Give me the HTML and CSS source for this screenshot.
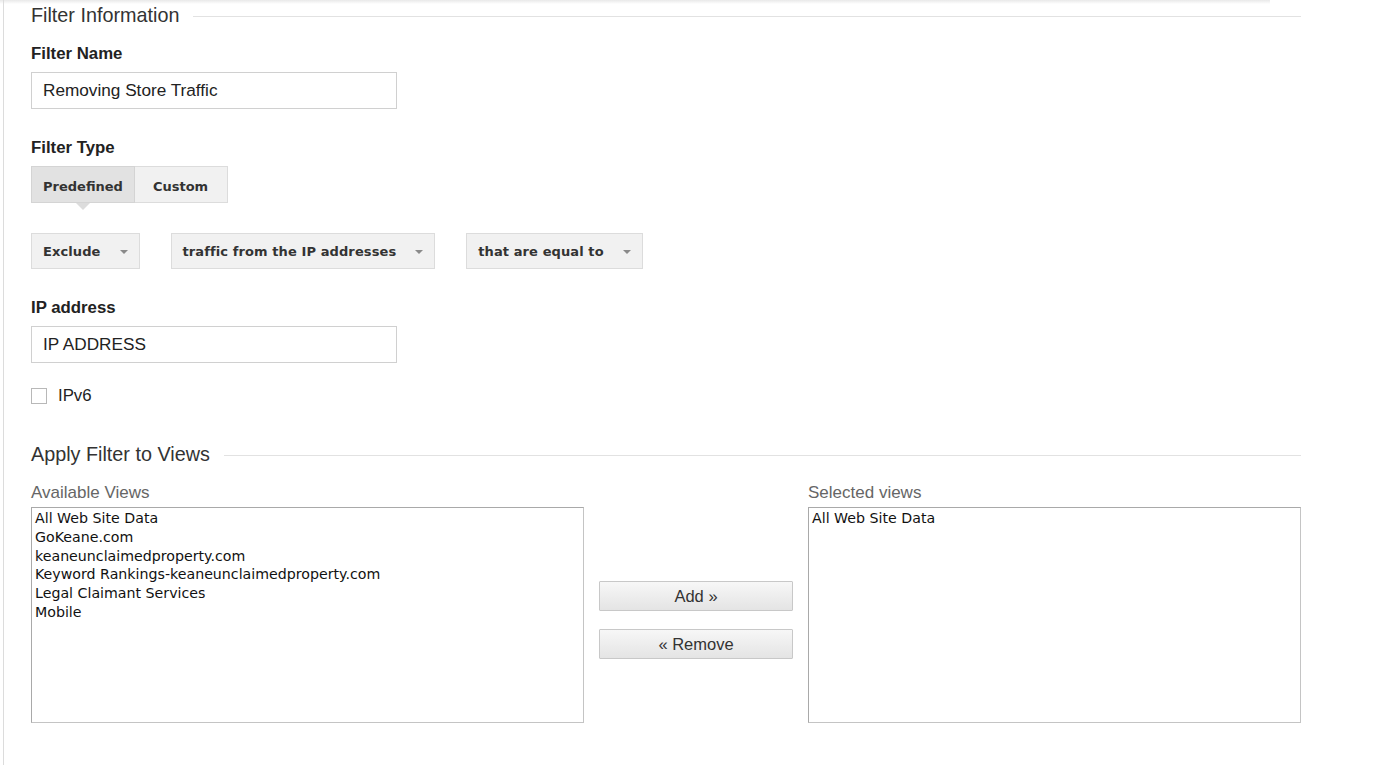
FILE: index.html
```html
<!DOCTYPE html>
<html lang="en">
<head>
<meta charset="utf-8">
<title>Filter Information</title>
<link rel="stylesheet" href="styles.css">
</head>
<body>
<div class="page">
  <div class="section-head">
    <h2 class="section-title">Filter Information</h2>
    <div class="rule"></div>
  </div>

  <label class="field-label first">Filter Name</label>
  <div class="text-input">Removing Store Traffic</div>

  <label class="field-label">Filter Type</label>
  <div class="tabs">
    <div class="tab active">Predefined</div>
    <div class="tab">Custom</div>
  </div>

  <div class="dropdowns">
    <div class="dropdown">Exclude<span class="caret"></span></div>
    <div class="dropdown">traffic from the IP addresses<span class="caret"></span></div>
    <div class="dropdown">that are equal to<span class="caret"></span></div>
  </div>

  <label class="field-label">IP address</label>
  <div class="text-input">IP ADDRESS</div>

  <div class="check-row">
    <span class="checkbox"></span>
    <span class="check-label">IPv6</span>
  </div>

  <div class="section-head second">
    <h2 class="section-title">Apply Filter to Views</h2>
    <div class="rule"></div>
  </div>

  <div class="views">
    <div class="view-col">
      <div class="view-label">Available Views</div>
      <div class="listbox">
        <div class="opt">All Web Site Data</div>
        <div class="opt">GoKeane.com</div>
        <div class="opt">keaneunclaimedproperty.com</div>
        <div class="opt">Keyword Rankings-keaneunclaimedproperty.com</div>
        <div class="opt">Legal Claimant Services</div>
        <div class="opt">Mobile</div>
      </div>
    </div>
    <div class="actions">
      <button class="btn">Add »</button>
      <button class="btn">« Remove</button>
    </div>
    <div class="view-col">
      <div class="view-label">Selected views</div>
      <div class="listbox">
        <div class="opt">All Web Site Data</div>
      </div>
    </div>
  </div>
</div>
</body>
</html>
```

FILE: styles.css
```css
html, body {
  margin: 0;
  padding: 0;
  background: #fff;
}

body {
  font-family: "Liberation Sans", Arial, sans-serif;
  color: #222;
  background-image: linear-gradient(#e9e9e9, #ffffff);
  background-repeat: no-repeat;
  background-size: 1270px 4px;
}

.page {
  margin-left: 3px;
  border-left: 1px solid #dcdcdc;
  padding: 0 90px 0 27px;
  min-height: 765px;
  box-sizing: border-box;
  width: 1388px;
}

.section-head {
  display: flex;
  align-items: center;
  height: 30px;
}

.section-head.second {
  margin-top: 35px;
}

.section-title {
  margin: 0;
  font-size: 19.8px;
  font-weight: normal;
  color: #333;
  line-height: 30px;
  white-space: nowrap;
}

.rule {
  flex: 1;
  height: 1px;
  background: #e2e2e2;
  margin-left: 14px;
  margin-top: 3px;
}

.field-label {
  display: block;
  font-size: 16.8px;
  font-weight: bold;
  line-height: 20px;
  color: #222;
  margin-top: 29px;
  margin-bottom: 8px;
}

.field-label.first {
  margin-top: 14px;
}

.text-input {
  width: 366px;
  height: 37px;
  box-sizing: border-box;
  border: 1px solid #d0d0d0;
  padding: 0 11px;
  font-size: 17.2px;
  line-height: 35px;
  color: #222;
}

.tabs {
  display: flex;
}

.tab {
  position: relative;
  height: 37px;
  box-sizing: border-box;
  border: 1px solid #dcdcdc;
  background: #f1f1f1;
  font-family: "DejaVu Sans", Verdana, sans-serif;
  font-size: 13px;
  font-weight: bold;
  color: #333;
  line-height: 35px;
  padding: 2px 11px 0;
}

.tab + .tab {
  border-left: none;
  padding: 2px 19px 0 18px;
}

.tab.active {
  background: #e2e2e2;
  border-color: #d4d4d4;
}

.tab.active::after {
  content: "";
  position: absolute;
  left: 50%;
  top: 36px;
  margin-left: -7px;
  border-left: 7px solid transparent;
  border-right: 7px solid transparent;
  border-top: 7px solid #dcdcdc;
}

.dropdowns {
  display: flex;
  gap: 31px;
  margin-top: 30px;
}

.dropdown {
  display: flex;
  align-items: center;
  height: 36px;
  box-sizing: border-box;
  border: 1px solid #dcdcdc;
  background: #f1f1f1;
  font-family: "DejaVu Sans", Verdana, sans-serif;
  font-size: 13px;
  font-weight: bold;
  letter-spacing: 0.1px;
  color: #333;
  padding: 0 11px;
}

.caret {
  display: inline-block;
  width: 0;
  height: 0;
  margin-left: 19px;
  margin-top: 2px;
  border-left: 4px solid transparent;
  border-right: 4px solid transparent;
  border-top: 4px solid #8a8a8a;
}

.check-row {
  display: flex;
  align-items: center;
  margin-top: 25px;
  height: 16px;
}

.checkbox {
  width: 16px;
  height: 16px;
  box-sizing: border-box;
  border: 1px solid #b8b8b8;
  background: #fff;
}

.check-label {
  margin-left: 11px;
  font-size: 16.8px;
  color: #222;
}

.views {
  display: grid;
  grid-template-columns: 553px 194px 493px;
  column-gap: 15px;
  margin-top: 14px;
}

.view-label {
  font-size: 17px;
  line-height: 20px;
  color: #666;
  margin-bottom: 4px;
}

.listbox {
  height: 216px;
  box-sizing: border-box;
  border: 1px solid #a9a9a9;
  border-right-color: #c4c4c4;
  border-bottom-color: #c4c4c4;
  padding: 1px 3px;
  font-family: "DejaVu Sans", Verdana, sans-serif;
  font-size: 14.2px;
  color: #111;
}

.opt {
  line-height: 18.8px;
  white-space: nowrap;
}

.actions {
  display: flex;
  flex-direction: column;
  gap: 18px;
  padding-top: 98px;
}

.btn {
  height: 30px;
  box-sizing: border-box;
  border: 1px solid #c8c8c8;
  border-radius: 1px;
  background: linear-gradient(#f7f7f7, #e4e4e4);
  font-family: "Liberation Sans", Arial, sans-serif;
  font-size: 16.5px;
  color: #333;
  padding: 0;
  margin: 0;
}
```
